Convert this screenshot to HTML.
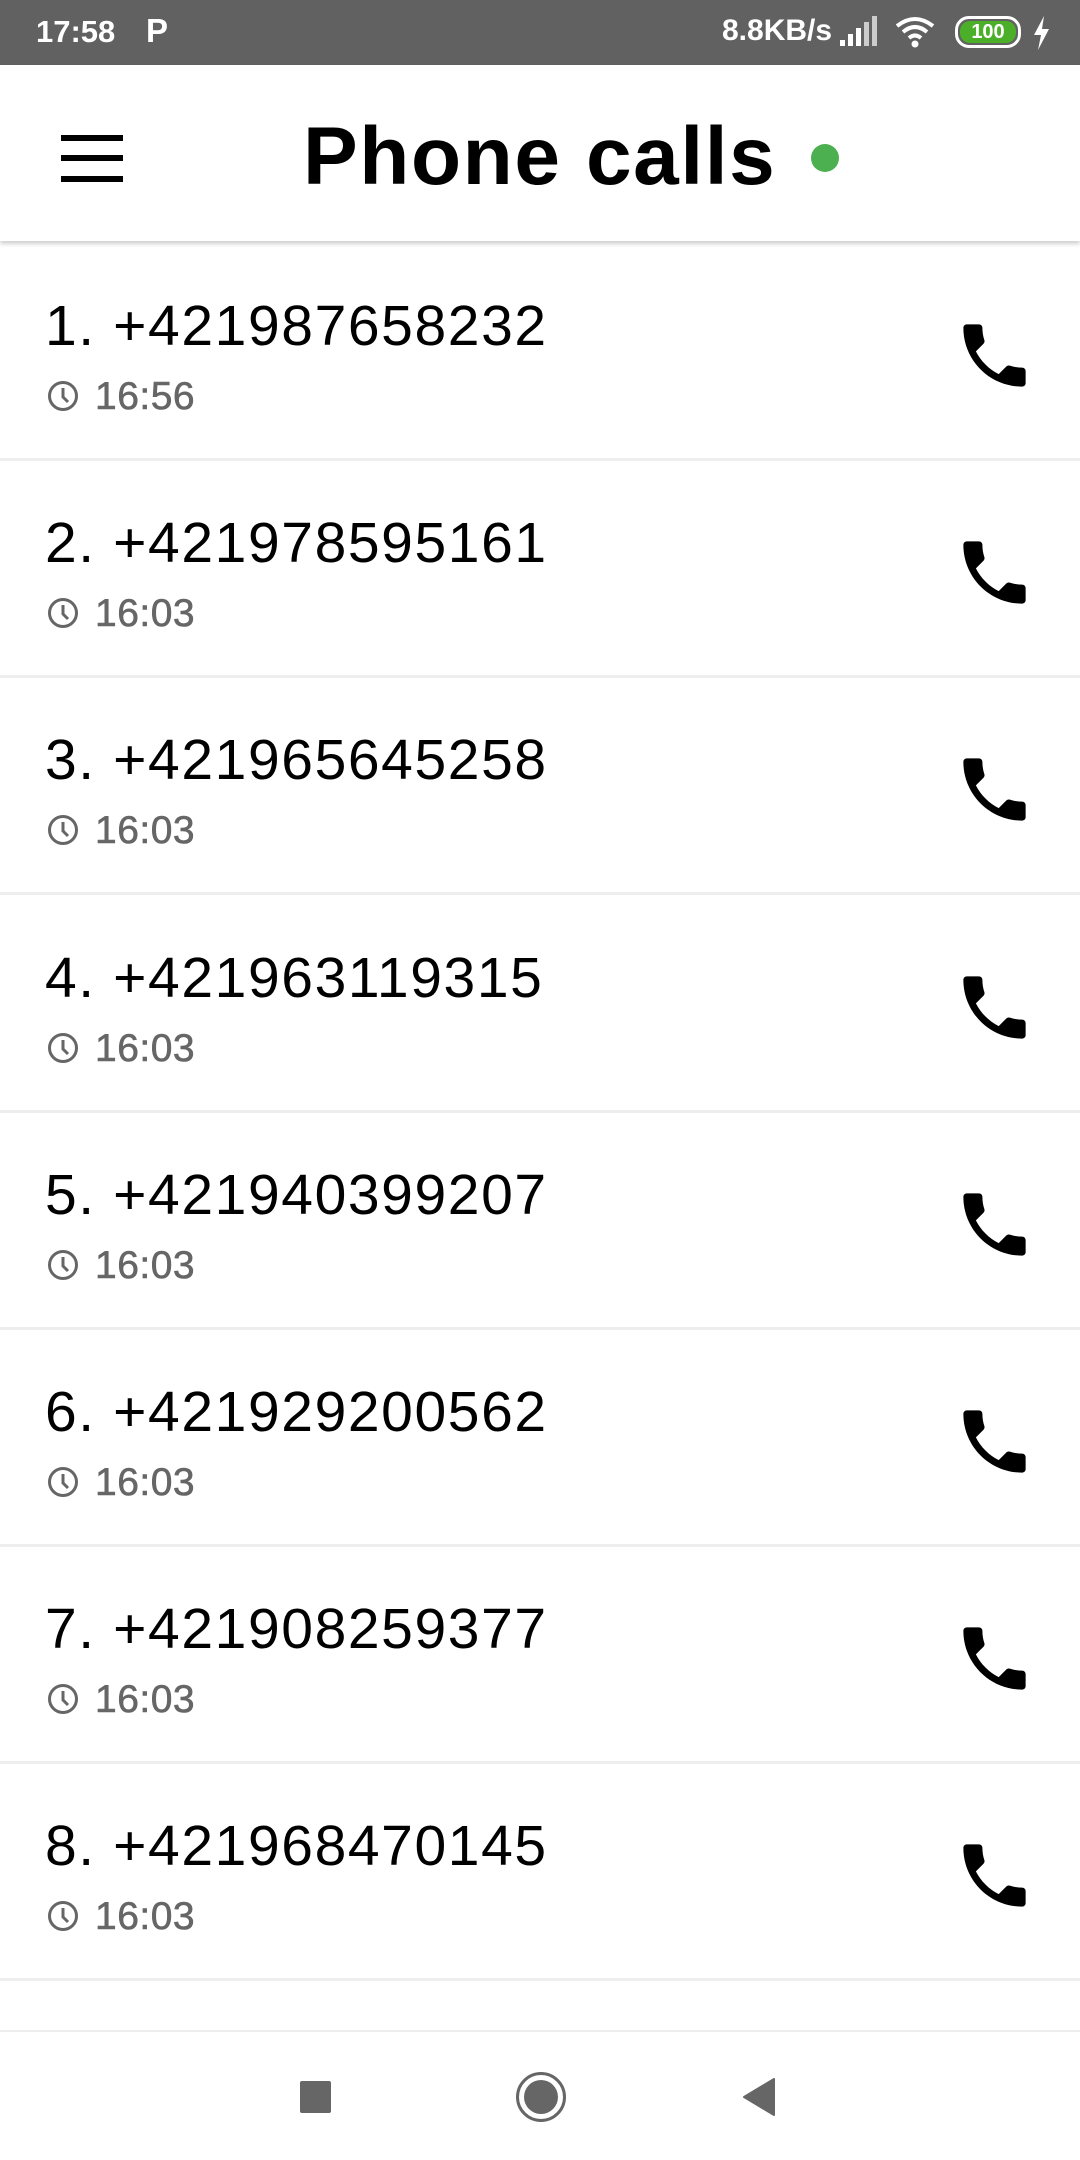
<!DOCTYPE html>
<html><head><meta charset="utf-8"><style>
*{margin:0;padding:0;box-sizing:border-box}
body{width:1080px;height:2160px;background:#fff;font-family:"Liberation Sans",sans-serif;position:relative;overflow:hidden}
.sb{position:absolute;left:0;top:0;width:1080px;height:65px;background:#616161;color:#fff}
.ab{position:absolute;left:0;top:65px;width:1080px;height:176px;background:#fff;box-shadow:0 3px 4px rgba(0,0,0,.18);z-index:2}
.row{position:absolute;left:0;width:1080px;height:217px;border-bottom:3px solid #eeeeee}
.num{position:absolute;left:45px;top:49px;font-size:57px;color:#000;letter-spacing:1.6px}
.tm{position:absolute;left:95px;top:131px;font-size:39px;color:#666;letter-spacing:0.5px;-webkit-text-stroke:0.6px #666}
.clk{position:absolute;left:47px;top:136px}
.ph{position:absolute;left:953px;top:70px}
</style></head><body>
<div class="sb">
<div style="position:absolute;left:36px;top:14px;font-size:31px;font-weight:bold">17:58</div>
<div style="position:absolute;left:146px;top:12px;font-size:33px;font-weight:bold">P</div>
<div style="position:absolute;left:722px;top:14px;font-size:30px;font-weight:bold">8.8KB/s</div>
<svg style="position:absolute;left:838px;top:16px" width="44" height="32"><rect x="2" y="24" width="5" height="6" fill="#fff"/><rect x="10" y="18" width="5" height="12" fill="#fff"/><rect x="18" y="12" width="5" height="18" fill="#fff"/><rect x="26" y="6" width="5" height="24" fill="#ccc"/><rect x="34" y="0" width="5" height="30" fill="#ccc"/></svg>
<svg style="position:absolute;left:895px;top:16px" width="44" height="36" viewBox="0 0 44 36"><path d="M2 10 Q20 -4 38 10" stroke="#fff" stroke-width="4" fill="none"/><path d="M8 16 Q20 6 32 16" stroke="#fff" stroke-width="4" fill="none"/><path d="M14 22 Q20 17 26 22" stroke="#fff" stroke-width="4" fill="none"/><circle cx="20" cy="28" r="3.5" fill="#fff"/></svg>
<div style="position:absolute;left:955px;top:16px;width:66px;height:32px;border:3px solid #fff;border-radius:14px;padding:2px"><div style="background:#4caf2a;border-radius:10px;height:22px;font-size:20px;font-weight:bold;text-align:center;line-height:22px">100</div></div>
<svg style="position:absolute;left:1030px;top:16px" width="22" height="34" viewBox="0 0 22 34"><path d="M14 0 L4 19 H11 L8 34 L19 13 H12 Z" fill="#fff"/></svg>
</div>
<div class="ab">
<div style="position:absolute;left:61px;top:70px;width:62px;height:6px;background:#000"></div>
<div style="position:absolute;left:61px;top:90px;width:62px;height:6px;background:#000"></div>
<div style="position:absolute;left:61px;top:111px;width:62px;height:6px;background:#000"></div>
<div style="position:absolute;left:303px;top:45px;font-size:82px;font-weight:bold;color:#000;letter-spacing:1.6px">Phone calls</div>
<div style="position:absolute;left:811px;top:79px;width:28px;height:28px;border-radius:50%;background:#4caf50"></div>
</div>
<div id="list"></div>
<div style="position:absolute;left:0;top:2030px;width:1080px;height:2px;background:#eee"></div>
<div style="position:absolute;left:300px;top:2081px;width:31px;height:32px;background:#666;border-radius:2px"></div>
<div style="position:absolute;left:516px;top:2072px;width:50px;height:50px;border:3px solid #666;border-radius:50%"><div style="position:absolute;left:5px;top:5px;width:34px;height:34px;border-radius:50%;background:#666"></div></div>
<svg style="position:absolute;left:742px;top:2078px" width="34" height="38" viewBox="0 0 34 38"><path d="M32 1 V37 L2 19 Z" fill="#666" stroke="#666" stroke-width="2" stroke-linejoin="round"/></svg>
<script>
var d=[["1. +421987658232","16:56"],["2. +421978595161","16:03"],["3. +421965645258","16:03"],["4. +421963119315","16:03"],["5. +421940399207","16:03"],["6. +421929200562","16:03"],["7. +421908259377","16:03"],["8. +421968470145","16:03"]];
var h="";
d.forEach(function(r,i){var t=244+i*217.2;
h+='<div class="row" style="top:'+t+'px"><div class="num">'+r[0]+'</div>'+
'<svg class="clk" width="32" height="32" viewBox="0 0 32 32"><circle cx="16" cy="16" r="13.5" stroke="#666" stroke-width="3" fill="none"/><path d="M16 8 V17 L21 22" stroke="#666" stroke-width="3" fill="none"/></svg>'+
'<div class="tm">'+r[1]+'</div>'+
'<svg class="ph" width="83" height="83" viewBox="0 0 24 24"><path fill="#000" d="M6.62 10.79c1.44 2.83 3.760 5.14 6.59 6.59l2.2-2.2c.27-.27.67-.36 1.02-.24 1.12.37 2.33.57 3.57.57.55 0 1 .45 1 1V20c0 .55-.45 1-1 1-9.39 0-17-7.61-17-17 0-.55.45-1 1-1h3.5c.55 0 1 .45 1 1 0 1.25.2 2.45.57 3.57.11.35.03.74-.25 1.020l-2.2 2.2z"/></svg></div>';});
document.getElementById("list").innerHTML=h;
</script>
</body></html>
